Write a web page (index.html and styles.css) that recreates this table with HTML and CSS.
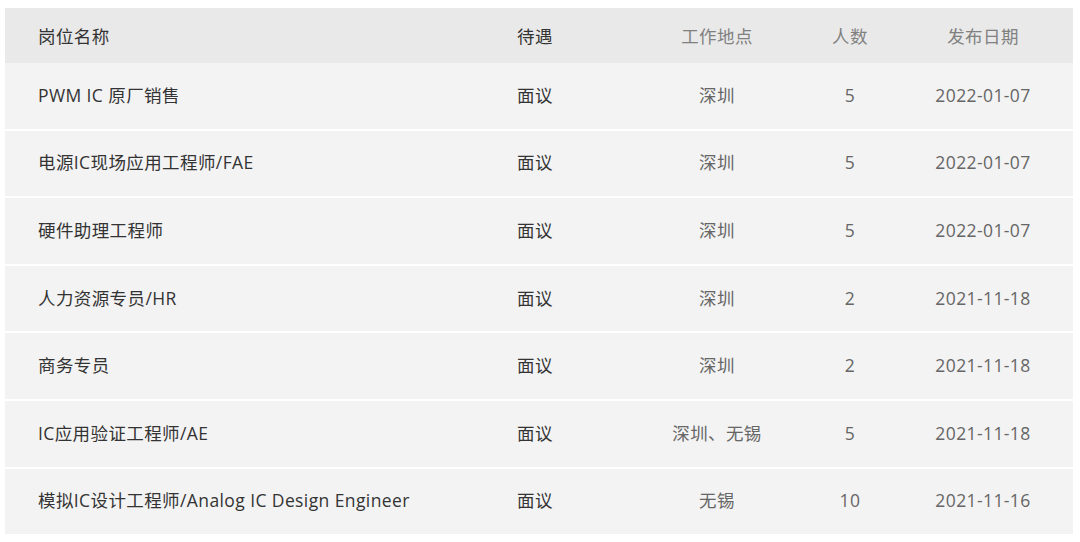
FILE: index.html
```html
<!DOCTYPE html>
<html lang="zh-CN">
<head>
<meta charset="utf-8">
<title>招聘岗位</title>
<link rel="stylesheet" href="styles.css">
</head>
<body>
<div class="jobs">
  <div class="row head">
    <div class="c name">岗位名称</div>
    <div class="c pay">待遇</div>
    <div class="c loc">工作地点</div>
    <div class="c num">人数</div>
    <div class="c date">发布日期</div>
  </div>
  <div class="row">
    <div class="c name">PWM IC 原厂销售</div>
    <div class="c pay">面议</div>
    <div class="c loc">深圳</div>
    <div class="c num">5</div>
    <div class="c date">2022-01-07</div>
  </div>
  <div class="row">
    <div class="c name">电源IC现场应用工程师/FAE</div>
    <div class="c pay">面议</div>
    <div class="c loc">深圳</div>
    <div class="c num">5</div>
    <div class="c date">2022-01-07</div>
  </div>
  <div class="row">
    <div class="c name">硬件助理工程师</div>
    <div class="c pay">面议</div>
    <div class="c loc">深圳</div>
    <div class="c num">5</div>
    <div class="c date">2022-01-07</div>
  </div>
  <div class="row">
    <div class="c name">人力资源专员/HR</div>
    <div class="c pay">面议</div>
    <div class="c loc">深圳</div>
    <div class="c num">2</div>
    <div class="c date">2021-11-18</div>
  </div>
  <div class="row">
    <div class="c name">商务专员</div>
    <div class="c pay">面议</div>
    <div class="c loc">深圳</div>
    <div class="c num">2</div>
    <div class="c date">2021-11-18</div>
  </div>
  <div class="row">
    <div class="c name">IC应用验证工程师/AE</div>
    <div class="c pay">面议</div>
    <div class="c loc">深圳、无锡</div>
    <div class="c num">5</div>
    <div class="c date">2021-11-18</div>
  </div>
  <div class="row">
    <div class="c name">模拟IC设计工程师/Analog IC Design Engineer</div>
    <div class="c pay">面议</div>
    <div class="c loc">无锡</div>
    <div class="c num">10</div>
    <div class="c date">2021-11-16</div>
  </div>
</div>
</body>
</html>
```
FILE: styles.css
```css
html, body {
  margin: 0;
  padding: 0;
  background: #ffffff;
}
body {
  padding: 8px 7px 0 5px;
  font-family: "Open Sans", "Noto Sans CJK SC", sans-serif;
  font-size: 17.5px;
  letter-spacing: 0.4px;
  color: #333333;
}
.jobs {
  display: flex;
  flex-direction: column;
  width: 1068px;
}
.row {
  display: grid;
  grid-template-columns: 479px 166px 134px 132px 157px;
  align-items: center;
  height: 65.6px;
  background: #f3f3f3;
  border-top: 2px solid #ffffff;
}
.row.head {
  height: 55px;
  background: #e9e9e9;
  border-top: 0;
}
.head + .row {
  border-top: 0;
}
.c {
  white-space: nowrap;
  line-height: 24px;
  padding-bottom: 2px;
}
.head .c {
  padding-bottom: 0;
}
.name {
  padding-left: 33px;
  color: #333333;
}
.pay {
  padding-left: 33px;
  color: #333333;
}
.loc, .num, .date {
  text-align: center;
  color: #666666;
}
.date {
  padding-right: 23px;
}
.head .loc, .head .num, .head .date {
  color: #808080;
}
```
